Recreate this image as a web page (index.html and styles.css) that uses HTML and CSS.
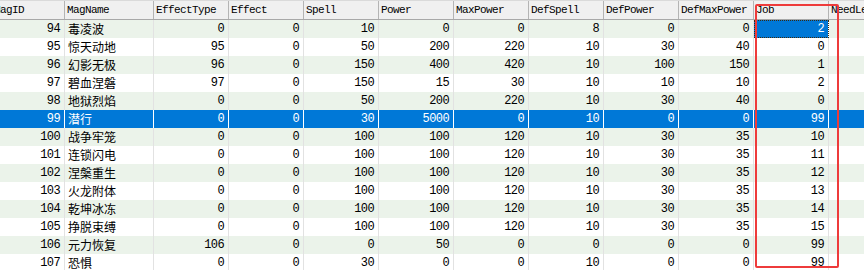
FILE: index.html
```html
<!DOCTYPE html>
<html>
<head>
<meta charset="utf-8">
<link rel="stylesheet" href="styles.css">
</head>
<body>
<div class="view">
  <div class="grid">
    <div class="row head">
      <div class="c">MagID</div><div class="c">MagName</div><div class="c">EffectType</div><div class="c">Effect</div><div class="c">Spell</div><div class="c">Power</div><div class="c">MaxPower</div><div class="c">DefSpell</div><div class="c">DefPower</div><div class="c">DefMaxPower</div><div class="c">Job</div><div class="c">NeedLevel</div>
    </div>
    <div class="row alt"><div class="c n">94</div><div class="c t">毒凌波</div><div class="c n">0</div><div class="c n">0</div><div class="c n">10</div><div class="c n">0</div><div class="c n">0</div><div class="c n">8</div><div class="c n">0</div><div class="c n">0</div><div class="c n focus">2</div><div class="c n"></div></div>
    <div class="row"><div class="c n">95</div><div class="c t">惊天动地</div><div class="c n">95</div><div class="c n">0</div><div class="c n">50</div><div class="c n">200</div><div class="c n">220</div><div class="c n">10</div><div class="c n">30</div><div class="c n">40</div><div class="c n">0</div><div class="c n"></div></div>
    <div class="row alt"><div class="c n">96</div><div class="c t">幻影无极</div><div class="c n">96</div><div class="c n">0</div><div class="c n">150</div><div class="c n">400</div><div class="c n">420</div><div class="c n">10</div><div class="c n">100</div><div class="c n">150</div><div class="c n">1</div><div class="c n"></div></div>
    <div class="row"><div class="c n">97</div><div class="c t">碧血涅磐</div><div class="c n">97</div><div class="c n">0</div><div class="c n">150</div><div class="c n">15</div><div class="c n">30</div><div class="c n">10</div><div class="c n">10</div><div class="c n">10</div><div class="c n">2</div><div class="c n"></div></div>
    <div class="row alt"><div class="c n">98</div><div class="c t">地狱烈焰</div><div class="c n">0</div><div class="c n">0</div><div class="c n">50</div><div class="c n">200</div><div class="c n">220</div><div class="c n">10</div><div class="c n">30</div><div class="c n">40</div><div class="c n">0</div><div class="c n"></div></div>
    <div class="row sel"><div class="c n">99</div><div class="c t">潜行</div><div class="c n">0</div><div class="c n">0</div><div class="c n">30</div><div class="c n">5000</div><div class="c n">0</div><div class="c n">10</div><div class="c n">0</div><div class="c n">0</div><div class="c n">99</div><div class="c n"></div></div>
    <div class="row alt"><div class="c n">100</div><div class="c t">战争牢笼</div><div class="c n">0</div><div class="c n">0</div><div class="c n">100</div><div class="c n">100</div><div class="c n">120</div><div class="c n">10</div><div class="c n">30</div><div class="c n">35</div><div class="c n">10</div><div class="c n"></div></div>
    <div class="row"><div class="c n">101</div><div class="c t">连锁闪电</div><div class="c n">0</div><div class="c n">0</div><div class="c n">100</div><div class="c n">100</div><div class="c n">120</div><div class="c n">10</div><div class="c n">30</div><div class="c n">35</div><div class="c n">11</div><div class="c n"></div></div>
    <div class="row alt"><div class="c n">102</div><div class="c t">涅槃重生</div><div class="c n">0</div><div class="c n">0</div><div class="c n">100</div><div class="c n">100</div><div class="c n">120</div><div class="c n">10</div><div class="c n">30</div><div class="c n">35</div><div class="c n">12</div><div class="c n"></div></div>
    <div class="row"><div class="c n">103</div><div class="c t">火龙附体</div><div class="c n">0</div><div class="c n">0</div><div class="c n">100</div><div class="c n">100</div><div class="c n">120</div><div class="c n">10</div><div class="c n">30</div><div class="c n">35</div><div class="c n">13</div><div class="c n"></div></div>
    <div class="row alt"><div class="c n">104</div><div class="c t">乾坤冰冻</div><div class="c n">0</div><div class="c n">0</div><div class="c n">100</div><div class="c n">100</div><div class="c n">120</div><div class="c n">10</div><div class="c n">30</div><div class="c n">35</div><div class="c n">14</div><div class="c n"></div></div>
    <div class="row"><div class="c n">105</div><div class="c t">挣脱束缚</div><div class="c n">0</div><div class="c n">0</div><div class="c n">100</div><div class="c n">100</div><div class="c n">120</div><div class="c n">10</div><div class="c n">30</div><div class="c n">35</div><div class="c n">15</div><div class="c n"></div></div>
    <div class="row alt"><div class="c n">106</div><div class="c t">元力恢复</div><div class="c n">106</div><div class="c n">0</div><div class="c n">0</div><div class="c n">50</div><div class="c n">0</div><div class="c n">0</div><div class="c n">0</div><div class="c n">0</div><div class="c n">99</div><div class="c n"></div></div>
    <div class="row"><div class="c n">107</div><div class="c t">恐惧</div><div class="c n">0</div><div class="c n">0</div><div class="c n">30</div><div class="c n">0</div><div class="c n">0</div><div class="c n">10</div><div class="c n">0</div><div class="c n">0</div><div class="c n">99</div><div class="c n"></div></div>
  </div>
  <div class="mark"></div>
</div>
</body>
</html>
```
FILE: styles.css
```css
html, body {
  margin: 0;
  padding: 0;
  background: #ffffff;
  overflow: hidden;
}
.view {
  position: relative;
  width: 864px;
  height: 270px;
  overflow: hidden;
}
.grid {
  margin-left: -8px;
  width: 1000px;
}
.row {
  display: grid;
  grid-template-columns: 73px 89px repeat(9, 75px) 120px;
  height: 18px;
  background: #ffffff;
}
.row.alt {
  background: #ebf3ea;
}
.c {
  box-sizing: border-box;
  border-right: 1px solid #e2e2e2;
  height: 18px;
  line-height: 18px;
  white-space: nowrap;
  overflow: hidden;
  color: #000;
}
.n {
  text-align: right;
  padding-right: 4px;
  font-family: "Liberation Mono", monospace;
  font-size: 12px;
  letter-spacing: -0.6px;
}
.t {
  padding-left: 3px;
  font-family: "Noto Sans CJK SC", sans-serif;
  font-size: 12px;
}
.row.head {
  height: 20px;
  background: #f0f0f0;
  border-top: 1px solid #dadada;
  border-bottom: 1px solid #a8a8a8;
  box-sizing: border-box;
}
.head .c {
  height: 18px;
  line-height: 18px;
  border-right: 1px solid #b4b4b4;
  padding-left: 2px;
  font-family: "Liberation Mono", monospace;
  font-size: 11px;
  letter-spacing: -0.6px;
}
.row.sel {
  background: #0078d7;
}
.sel .c {
  color: #ffffff;
  border-right-color: #ffffff;
}
.c.focus {
  background: #0078d7;
  color: #ffffff;
  outline: 1px dotted #3a2a10;
  outline-offset: -1px;
  border-right: 1px solid #ffffff;
}
.mark {
  position: absolute;
  left: 755px;
  top: 4px;
  width: 84px;
  height: 264px;
  box-sizing: border-box;
  border: 2px solid #ee3b3b;
  border-radius: 2px;
}
```
